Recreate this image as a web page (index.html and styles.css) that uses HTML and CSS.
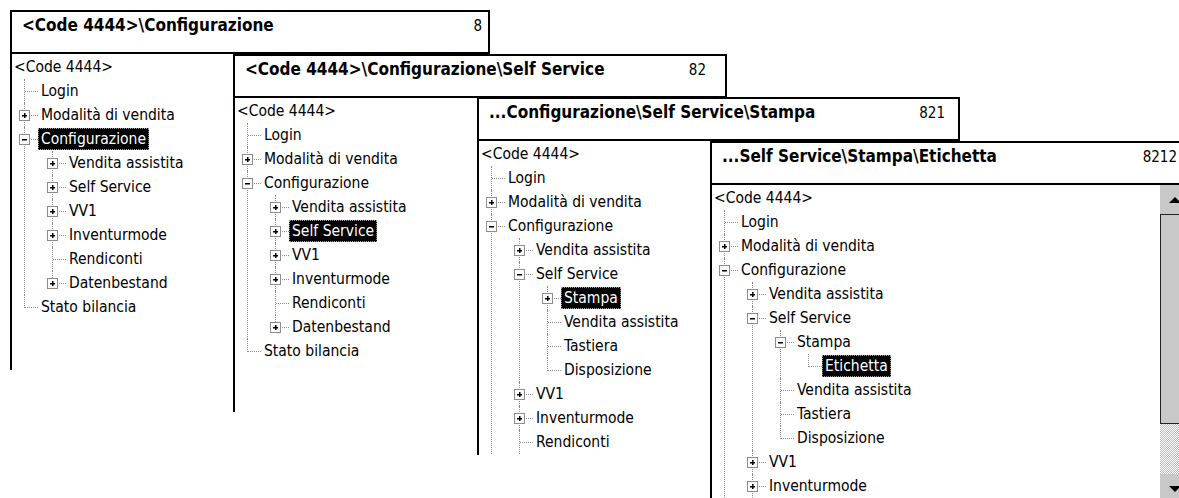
FILE: index.html
```html
<!DOCTYPE html>
<html lang="it">
<head>
    <meta charset="UTF-8">
    <meta name="viewport" content="width=device-width, initial-scale=1.0">
    <title>Configurazione</title>
    <link rel="stylesheet" href="styles.css">
</head>
<body>
    <div class="desk">

        <!-- 8 -->
        <section class="win w1">
            <header class="title"><span class="path">&lt;Code 4444&gt;\Configurazione</span><span class="num">8</span></header>
            <div class="panel">
                <ul class="tree">
                    <li class="root"><div class="row"><span class="label">&lt;Code 4444&gt;</span></div>
                        <ul>
                            <li><div class="row"><span class="label">Login</span></div></li>
                            <li><div class="row"><i class="exp plus"></i><span class="label">Modalità di vendita</span></div></li>
                            <li><div class="row"><i class="exp"></i><span class="label sel">Configurazione</span></div>
                                <ul>
                                    <li><div class="row"><i class="exp plus"></i><span class="label">Vendita assistita</span></div></li>
                                    <li><div class="row"><i class="exp plus"></i><span class="label">Self Service</span></div></li>
                                    <li><div class="row"><i class="exp plus"></i><span class="label">VV1</span></div></li>
                                    <li><div class="row"><i class="exp plus"></i><span class="label">Inventurmode</span></div></li>
                                    <li><div class="row"><span class="label">Rendiconti</span></div></li>
                                    <li class="last"><div class="row"><i class="exp plus"></i><span class="label">Datenbestand</span></div></li>
                                </ul>
                            </li>
                            <li class="last"><div class="row"><span class="label">Stato bilancia</span></div></li>
                        </ul>
                    </li>
                </ul>
            </div>
        </section>

        <!-- 82 -->
        <section class="win w2">
            <header class="title"><span class="path">&lt;Code 4444&gt;\Configurazione\Self Service</span><span class="num">82</span></header>
            <div class="panel">
                <ul class="tree">
                    <li class="root"><div class="row"><span class="label">&lt;Code 4444&gt;</span></div>
                        <ul>
                            <li><div class="row"><span class="label">Login</span></div></li>
                            <li><div class="row"><i class="exp plus"></i><span class="label">Modalità di vendita</span></div></li>
                            <li><div class="row"><i class="exp"></i><span class="label">Configurazione</span></div>
                                <ul>
                                    <li><div class="row"><i class="exp plus"></i><span class="label">Vendita assistita</span></div></li>
                                    <li><div class="row"><i class="exp plus"></i><span class="label sel">Self Service</span></div></li>
                                    <li><div class="row"><i class="exp plus"></i><span class="label">VV1</span></div></li>
                                    <li><div class="row"><i class="exp plus"></i><span class="label">Inventurmode</span></div></li>
                                    <li><div class="row"><span class="label">Rendiconti</span></div></li>
                                    <li class="last"><div class="row"><i class="exp plus"></i><span class="label">Datenbestand</span></div></li>
                                </ul>
                            </li>
                            <li class="last"><div class="row"><span class="label">Stato bilancia</span></div></li>
                        </ul>
                    </li>
                </ul>
            </div>
        </section>

        <!-- 821 -->
        <section class="win w3">
            <header class="title"><span class="path">...Configurazione\Self Service\Stampa</span><span class="num">821</span></header>
            <div class="panel">
                <ul class="tree">
                    <li class="root"><div class="row"><span class="label">&lt;Code 4444&gt;</span></div>
                        <ul>
                            <li><div class="row"><span class="label">Login</span></div></li>
                            <li><div class="row"><i class="exp plus"></i><span class="label">Modalità di vendita</span></div></li>
                            <li><div class="row"><i class="exp"></i><span class="label">Configurazione</span></div>
                                <ul>
                                    <li><div class="row"><i class="exp plus"></i><span class="label">Vendita assistita</span></div></li>
                                    <li><div class="row"><i class="exp"></i><span class="label">Self Service</span></div>
                                        <ul>
                                            <li><div class="row"><i class="exp plus"></i><span class="label sel">Stampa</span></div></li>
                                            <li><div class="row"><span class="label">Vendita assistita</span></div></li>
                                            <li><div class="row"><span class="label">Tastiera</span></div></li>
                                            <li class="last"><div class="row"><span class="label">Disposizione</span></div></li>
                                        </ul>
                                    </li>
                                    <li><div class="row"><i class="exp plus"></i><span class="label">VV1</span></div></li>
                                    <li><div class="row"><i class="exp plus"></i><span class="label">Inventurmode</span></div></li>
                                    <li class="more"><div class="row"><span class="label">Rendiconti</span></div></li>
                                </ul>
                            </li>
                        </ul>
                    </li>
                </ul>
            </div>
        </section>

        <!-- 8212 -->
        <section class="win w4">
            <header class="title"><span class="path">...Self Service\Stampa\Etichetta</span><span class="num">8212</span></header>
            <div class="panel">
                <ul class="tree">
                    <li class="root"><div class="row"><span class="label">&lt;Code 4444&gt;</span></div>
                        <ul>
                            <li><div class="row"><span class="label">Login</span></div></li>
                            <li><div class="row"><i class="exp plus"></i><span class="label">Modalità di vendita</span></div></li>
                            <li><div class="row"><i class="exp"></i><span class="label">Configurazione</span></div>
                                <ul>
                                    <li><div class="row"><i class="exp plus"></i><span class="label">Vendita assistita</span></div></li>
                                    <li><div class="row"><i class="exp"></i><span class="label">Self Service</span></div>
                                        <ul>
                                            <li><div class="row"><i class="exp"></i><span class="label">Stampa</span></div>
                                                <ul>
                                                    <li class="last"><div class="row"><span class="label sel">Etichetta</span></div></li>
                                                </ul>
                                            </li>
                                            <li><div class="row"><span class="label">Vendita assistita</span></div></li>
                                            <li><div class="row"><span class="label">Tastiera</span></div></li>
                                            <li class="last"><div class="row"><span class="label">Disposizione</span></div></li>
                                        </ul>
                                    </li>
                                    <li><div class="row"><i class="exp plus"></i><span class="label">VV1</span></div></li>
                                    <li class="more"><div class="row"><i class="exp plus"></i><span class="label">Inventurmode</span></div></li>
                                </ul>
                            </li>
                        </ul>
                    </li>
                </ul>
                <div class="scrollbar">
                    <div class="sb-btn"><span class="arrow up"></span></div>
                    <div class="sb-thumb"></div>
                    <div class="sb-track"></div>
                    <div class="sb-btn"><span class="arrow down"></span></div>
                </div>
            </div>
        </section>

    </div>
</body>
</html>
```

FILE: styles.css
```css
body {
    margin: 0;
    padding: 0;
    background-color: #fff;
    overflow: hidden;
    font-family: "DejaVu Sans Condensed", "DejaVu Sans", sans-serif;
    font-stretch: condensed;
    color: #000;
}

.desk {
    position: relative;
    width: 1179px;
    height: 498px;
    overflow: hidden;
}

/* windows are stacked like cards on a desk */
.win {
    position: absolute;
    background-color: #fff;
}

.w1 { left: 10px;  top: 10px;  width: 480px; }
.w2 { left: 233px; top: 54px;  width: 494px; }
.w3 { left: 477px; top: 97px;  width: 483px; }
.w4 { left: 710px; top: 141px; width: 480px; }

.w1 .panel { height: 316px; }
.w2 .panel { height: 314px; }
.w3 .panel { height: 314px; }
.w4 .panel { height: 330px; }

.w1 .num { margin-right: 6px; }
.w2 .num { margin-right: 19px; }
.w3 .num { margin-right: 13px; }
.w4 .num { margin-right: 11px; }

.title {
    display: flex;
    justify-content: space-between;
    align-items: baseline;
    height: 44px;
    box-sizing: border-box;
    border: 2px solid #000;
    padding: 3px 0 0 10px;
}

.path {
    font-size: 17px;
    font-weight: bold;
}

.num {
    font-size: 15px;
}

.panel {
    display: flex;
    border-left: 2px solid #000;
    overflow: hidden;
}

/* tree view */
.tree,
.tree ul {
    list-style: none;
    margin: 0;
    padding: 0;
}

.tree {
    flex: 1;
    padding-top: 1px;
    font-size: 15.5px;
}

.tree ul {
    padding-left: 28px;
}

.root > ul {
    padding-left: 0;
}

.tree li {
    position: relative;
}

.tree li::before {
    content: "";
    position: absolute;
    left: 12px;
    top: 0;
    bottom: 0;
    border-left: 1px dotted #8a8a8a;
}

.tree li.last::before {
    bottom: auto;
    height: 13px;
}

.tree li.more::before {
    bottom: -4px;
}

.tree li::after {
    content: "";
    position: absolute;
    left: 13px;
    top: 12px;
    width: 13px;
    border-top: 1px dotted #8a8a8a;
}

.tree li.root::before,
.tree li.root::after {
    display: none;
}

.row {
    position: relative;
    display: flex;
    align-items: center;
    height: 24px;
    padding-left: 27px;
}

.root > .row {
    padding-left: 0;
}

.label {
    padding: 0 2px;
    line-height: 20px;
    white-space: nowrap;
    border: 1px solid transparent;
    margin-left: -1px;
}

.label.sel {
    background-color: #000;
    color: #fff;
    border: 1px dotted #9a9a9a;
}

.exp {
    position: absolute;
    left: 7px;
    top: 7px;
    width: 11px;
    height: 11px;
    box-sizing: border-box;
    border: 1px solid #8c8c8c;
    background-color: #fff;
    z-index: 1;
}

.exp::before {
    content: "";
    position: absolute;
    left: 2px;
    top: 4px;
    width: 5px;
    height: 1px;
    background-color: #000;
    box-shadow: 0 0.5px 0 #000;
}

.exp.plus::after {
    content: "";
    position: absolute;
    left: 4px;
    top: 2px;
    width: 1px;
    height: 5px;
    background-color: #000;
    box-shadow: 0.5px 0 0 #000;
}

/* scrollbar of the last window */
.scrollbar {
    display: flex;
    flex-direction: column;
    width: 30px;
    flex-shrink: 0;
}

.sb-btn {
    display: flex;
    justify-content: center;
    align-items: center;
    height: 29px;
    background-color: #c8c8c8;
}

.sb-thumb {
    height: 208px;
    background-color: #c8c8c8;
    border: 1px solid #222;
    border-right: none;
}

.sb-track {
    height: 50px;
    background: repeating-conic-gradient(#b8b8b8 0 25%, #fff 0 50%) 0 0 / 2px 2px;
}

.arrow {
    width: 0;
    height: 0;
    border-left: 6px solid transparent;
    border-right: 6px solid transparent;
}

.arrow.up {
    border-bottom: 6px solid #000;
}

.arrow.down {
    border-top: 6px solid #000;
}
```
